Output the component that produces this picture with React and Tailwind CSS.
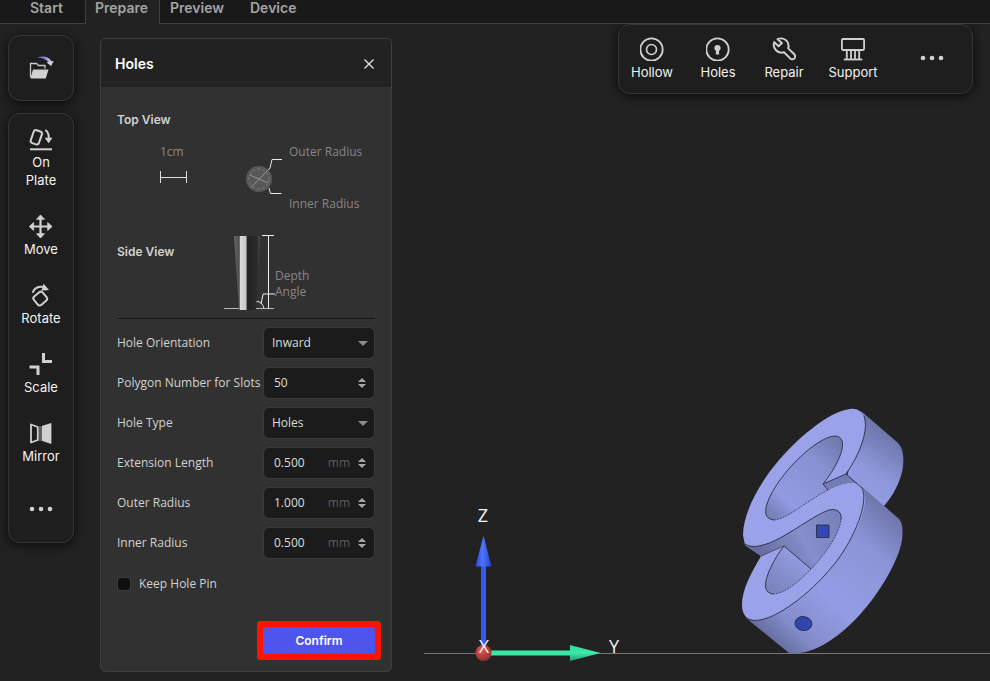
import React, { useState } from "react";

const stroke = {
  fill: "none",
  stroke: "currentColor",
  strokeWidth: 2,
  strokeLinecap: "round",
  strokeLinejoin: "round",
};

function Icon({ children }) {
  return (
    <svg viewBox="0 0 24 24" className="size-6 shrink-0 text-[#d0d0d0]" aria-hidden="true">
      {children}
    </svg>
  );
}

const OnPlateIcon = () => (
  <Icon>
    <g {...stroke}>
      <rect x="3" y="3.6" width="8.600" height="13.6" rx="2.4" transform="rotate(19 7.500 10.4)" />
      <path d="M17 3.500c2.200 2 3 4.500 2.700 7.500" />
      <path d="M1 22.300h22" strokeLinecap="butt" />
    </g>
    <path d="M15.700 10.700h7.800l-3.900 5.500z" fill="currentColor" />
  </Icon>
);

const MoveIcon = () => (
  <Icon>
    <path d="M11.500 2.500v20M2 12.500h19.500" {...stroke} strokeWidth="2.200" />
    <path
      d="M11.500 1l4 4.300h-8zM11.500 24l4-4.300h-8zM.3 12.500l4.300-4v8zM23 12.500l-4.300-4v8z"
      fill="currentColor"
      stroke="currentColor"
      strokeWidth=".8"
      strokeLinejoin="round"
    />
  </Icon>
);

const RotateIcon = () => (
  <Icon>
    <rect x="5.500" y="10" width="11.500" height="11" rx="2.800" transform="rotate(-40 11.300 15.500)" {...stroke} />
    <path d="M4 9c1.500-4 6-5.800 11.500-5" {...stroke} />
    <path d="M14.500.8l5.500 6.200-7.500.8z" fill="currentColor" />
  </Icon>
);

const ScaleIcon = () => (
  <Icon>
    <g fill="none" stroke="currentColor" strokeWidth="3">
      <path d="M14.500 1v8.500H23" />
      <path d="M.5 15H9v8" />
    </g>
  </Icon>
);

const MirrorIcon = () => (
  <Icon>
    <path d="M2 3.500l6.800 2.500v13L2 21.500z" {...stroke} strokeWidth="1.800" />
    <path d="M13 5.300L22 2.500v20l-9-3z" fill="currentColor" stroke="currentColor" strokeWidth=".8" strokeLinejoin="round" />
    <path d="M11 5v15" stroke="currentColor" strokeWidth=".7" />
  </Icon>
);

const HollowIcon = () => (
  <Icon>
    <circle cx="11.500" cy="12.500" r="11.200" {...stroke} strokeWidth="1.800" />
    <circle cx="11.500" cy="12.500" r="5" {...stroke} strokeWidth="1.600" />
  </Icon>
);

const HolesIcon = () => (
  <Icon>
    <circle cx="11.500" cy="12.500" r="11.200" {...stroke} strokeWidth="1.800" />
    <circle cx="11.500" cy="11" r="3.100" fill="currentColor" />
    <path d="M10.200 12h2.600l.4 5.500h-3.400z" fill="currentColor" />
  </Icon>
);

const RepairIcon = () => (
  <Icon>
    <path
      d="M5.500 2.200c3.500-1.500 7.500-.7 9.700 2.300 1.400 2.100 1.700 4.500 1 6.900l6.100 5.900c1.200 1.200 1.200 2.900.1 4.100-1.100 1.200-2.900 1.200-4.200 0L12 15.300c-3 .9-5.900.2-8-2-2.200-2.300-2.800-5.200-1.700-8.200l4.300 4.100 3.300-3.100z"
      {...stroke}
    />
  </Icon>
);

const SupportIcon = () => (
  <Icon>
    <g fill="none" stroke="currentColor" strokeWidth="1.800">
      <rect x=".9" y="2" width="22.200" height="11" rx="1.200" />
      <path d="M5.800 13v9M10 13v9M14 13v9M18.200 13v9" />
      <path d="M2.800 22.500h18.500" />
    </g>
  </Icon>
);

const DotsIcon = () => (
  <Icon>
    <circle cx="3" cy="12" r="2.300" fill="currentColor" />
    <circle cx="12" cy="12" r="2.300" fill="currentColor" />
    <circle cx="21" cy="12" r="2.300" fill="currentColor" />
  </Icon>
);

function Tool({ icon, label, className = "" }) {
  return (
    <button className={"flex flex-col items-center gap-0.5 text-[13px] leading-[18px] text-[#f2f2f2] " + className}>
      {icon}
      <span>{label}</span>
    </button>
  );
}

const box = "rounded-xl border border-[#363636] bg-[#1e1e1e] shadow-[0_2px_12px_rgba(0,0,0,0.7)]";

function Header() {
  return (
    <header className="flex h-6 text-[14px] leading-4 font-semibold text-[#a3a3a3]">
      <nav className="flex w-full">
        <button className="flex w-[85px] border-b border-[#414141] bg-[#191919] pl-[30px]">Start</button>
        <button className="flex w-[75px] border-x border-[#414141] bg-[#222222] pl-[9px]">Prepare</button>
        <div className="flex flex-1 items-start gap-[26px] border-b border-[#414141] bg-[#191919] pl-[10px]">
          <button>Preview</button>
          <button>Device</button>
        </div>
      </nav>
    </header>
  );
}

function Rail() {
  return (
    <aside className="flex w-[66px] shrink-0 flex-col gap-3 pt-[11px]">
      <button aria-label="Open file" className={"flex h-[66px] items-center justify-center " + box}>
        <svg viewBox="0 0 26 26" className="size-[26px]" aria-hidden="true">
          <defs>
            <linearGradient id="swoosh" x1="0" x2="1">
              <stop offset="0" stopColor="#4648a8" />
              <stop offset="1" stopColor="#c8c8e8" />
            </linearGradient>
          </defs>
          <path d="M2.500 22V8.500h6l2 2h6.500v3" fill="none" stroke="#c9c9c9" strokeWidth="1.300" />
          <path d="M5 14.500h15.500l-2.800 9H2.400z" fill="#d2d2d2" />
          <path d="M9 3c5-2.800 13.500-1.500 15 5l-3 .5C19.500 4.300 14 2.600 9 3z" fill="url(#swoosh)" />
          <path d="M18.500 7.500l7.200-1.700-2.500 5.200z" fill="#d2d2d2" />
        </svg>
      </button>
      <div className={"flex flex-col items-center gap-[25px] pt-[13px] pb-[14px] " + box}>
        <Tool icon={<OnPlateIcon />} label="On Plate" className="w-10" />
        <Tool icon={<MoveIcon />} label="Move" />
        <Tool icon={<RotateIcon />} label="Rotate" />
        <Tool icon={<ScaleIcon />} label="Scale" />
        <Tool icon={<MirrorIcon />} label="Mirror" />
        <button aria-label="More tools" className="flex h-[38px] items-center">
          <DotsIcon />
        </button>
      </div>
    </aside>
  );
}

function Toolbar() {
  return (
    <div className={"ml-auto flex h-[70px] shrink-0 pt-3 " + box}>
      <Tool icon={<HollowIcon />} label="Hollow" className="w-[66px]" />
      <Tool icon={<HolesIcon />} label="Holes" className="w-[66px]" />
      <Tool icon={<RepairIcon />} label="Repair" className="w-[66px]" />
      <Tool icon={<SupportIcon />} label="Support" className="w-[72px]" />
      <button aria-label="More actions" className="flex h-[42px] w-[83px] items-center justify-center pl-0.5">
        <DotsIcon />
      </button>
    </div>
  );
}

const field =
  "flex h-[30px] w-[110px] items-center rounded-[5px] bg-[#1b1b1b] text-[#dcdcdc] shadow-[0_0_0_1px_#3a3a3a]";

function Row({ id, label, children }) {
  return (
    <div className="flex items-center justify-between">
      <label htmlFor={id} className="whitespace-nowrap">
        {label}
      </label>
      {children}
    </div>
  );
}

function SelectRow({ id, label, options }) {
  return (
    <Row id={id} label={label}>
      <div className={"relative " + field}>
        <select id={id} className="h-full w-full appearance-none bg-transparent pl-2 outline-none">
          {options.map((o) => (
            <option key={o}>{o}</option>
          ))}
        </select>
        <svg viewBox="0 0 10 5" className="pointer-events-none absolute right-1.5 h-[5px] w-[10px]" aria-hidden="true">
          <path d="M0 0h10L5 5z" fill="#8c8c8c" />
        </svg>
      </div>
    </Row>
  );
}

function NumberRow({ id, label, initial, unit }) {
  const [value, setValue] = useState(initial);
  return (
    <Row id={id} label={label}>
      <div className={"gap-2 pr-2 pl-[10px] " + field}>
        <input
          id={id}
          inputMode="decimal"
          value={value}
          onChange={(e) => setValue(e.target.value)}
          className="w-0 flex-1 bg-transparent outline-none"
        />
        {unit && <span className="text-[#5c5c5c]">{unit}</span>}
        <svg viewBox="0 0 8 10" className="h-[10px] w-2 shrink-0" aria-hidden="true">
          <path d="M4 0l4 4H0zM4 10l4-4H0z" fill="#a8a8a8" />
        </svg>
      </div>
    </Row>
  );
}

function TopViewFigure() {
  return (
    <svg viewBox="0 0 258 104" className="block h-[104px] w-full font-['Open_Sans',sans-serif] text-[12px]" fill="#868686">
      <text x="43" y="28">1cm</text>
      <path d="M43.500 43v12M69.500 43v12M43.500 49.500h26" stroke="#dedede" fill="none" />
      <circle cx="142" cy="51" r="13" fill="#585858" />
      <circle cx="142" cy="51" r="10" fill="none" stroke="#808080" strokeDasharray="3 2" strokeWidth=".8" />
      <path d="M134 59.500l17.500-18M133 47l18 8" stroke="#a5a5a5" strokeWidth=".8" fill="none" />
      <path d="M151.500 42l1.500-2 2-8.500h10M152 60l1.500 5.500h11" stroke="#e8e8e8" fill="none" />
      <text x="172" y="28">Outer Radius</text>
      <text x="172" y="80">Inner Radius</text>
    </svg>
  );
}

function SideViewFigure() {
  return (
    <svg viewBox="0 0 100 86" className="block h-[86px] w-[100px] font-['Open_Sans',sans-serif] text-[12px]" fill="#868686">
      <defs>
        <linearGradient id="cone" x1="0" x2="1">
          <stop offset="0" stopColor="#6a6a6a" />
          <stop offset=".2" stopColor="#4c4c4c" />
          <stop offset=".25" stopColor="#d8d8d8" />
          <stop offset=".45" stopColor="#c8c8c8" />
          <stop offset=".52" stopColor="#222222" />
          <stop offset=".9" stopColor="#2c2c2c" />
          <stop offset="1" stopColor="#555555" />
        </linearGradient>
      </defs>
      <path d="M0 76.500h15M31 76.500h19" stroke="#b8b8b8" />
      <path d="M10 4h26l-4 74H15z" fill="url(#cone)" />
      <path d="M38 3.500h12M44.500 4v73M32.500 69.500c4 0 6 2 7.500 7M37 72l2-9.500v-.5h12" stroke="#f0f0f0" fill="none" />
      <text x="51" y="48">Depth</text>
      <text x="51" y="64">Angle</text>
    </svg>
  );
}

function HolesPanel() {
  return (
    <section className="mt-[14px] ml-[26px] flex w-[292px] shrink-0 flex-col self-start rounded-[5px] border border-[#3e3e3e] bg-[#313131] text-[12px] leading-4 text-[#d2d2d2]">
      <div className="flex h-12 items-center justify-between rounded-t bg-[#222222] pt-0.5 pr-[17px] pl-[14px]">
        <h2 className="text-[14px] font-semibold text-white">Holes</h2>
        <button aria-label="Close">
          <svg viewBox="0 0 10 10" className="size-[10px]">
            <path d="M.5.5l9 9M9.500.5l-9 9" stroke="#e4e4e4" strokeWidth="1.300" />
          </svg>
        </button>
      </div>
      <div className="px-4 pt-[25px]">
        <h3 className="font-semibold">Top View</h3>
        <TopViewFigure />
        <div className="flex">
          <h3 className="w-[107px] pt-3 font-semibold">Side View</h3>
          <SideViewFigure />
        </div>
        <hr className="border-[#191919]" />
        <form
          className="mt-[9px] flex flex-col gap-[10px] pr-px font-['Open_Sans',sans-serif]"
          onSubmit={(e) => e.preventDefault()}
        >
          <SelectRow id="orientation" label="Hole Orientation" options={["Inward", "Outward"]} />
          <NumberRow id="slots" label="Polygon Number for Slots" initial="50" />
          <SelectRow id="type" label="Hole Type" options={["Holes", "Slots"]} />
          <NumberRow id="extension" label="Extension Length" initial="0.500" unit="mm" />
          <NumberRow id="outer" label="Outer Radius" initial="1.000" unit="mm" />
          <NumberRow id="inner" label="Inner Radius" initial="0.500" unit="mm" />
          <label className="mt-2 flex items-center gap-[9px] pl-px">
            <input
              type="checkbox"
              className="size-3 appearance-none rounded-[3px] bg-[#111111] shadow-[0_0_0_1px_#3c3c3c] checked:bg-[#4f55ec]"
            />
            Keep Hole Pin
          </label>
          <div className="mt-[19px] -mr-[7px] mb-[11px] self-end rounded-[3px] bg-[#ff1200] p-1.5 font-[Inter,sans-serif]">
            <button className="block h-[27px] w-28 rounded-[2px] bg-[#4f55ec] font-semibold text-white">Confirm</button>
          </div>
        </form>
      </div>
    </section>
  );
}

function Scene() {
  return (
    <svg
      viewBox="0 24 990 657"
      preserveAspectRatio="xMidYMax slice"
      className="absolute inset-0 -z-10 h-full w-full"
      role="img"
      aria-label="Model on the build plate"
    >
      <defs>
        <linearGradient id="upperSide" gradientUnits="userSpaceOnUse" x1="895" y1="440" x2="855" y2="500">
          <stop offset="0" stopColor="#6f77ac" />
          <stop offset=".55" stopColor="#8f98dc" />
          <stop offset="1" stopColor="#949de4" />
        </linearGradient>
        <linearGradient id="lowerSide" gradientUnits="userSpaceOnUse" x1="895" y1="510" x2="775" y2="645">
          <stop offset="0" stopColor="#6b73a6" />
          <stop offset=".25" stopColor="#8b94d6" />
          <stop offset=".6" stopColor="#949de4" />
          <stop offset=".85" stopColor="#848ccc" />
          <stop offset="1" stopColor="#666d9e" />
        </linearGradient>
        <linearGradient id="upperHole" gradientUnits="userSpaceOnUse" x1="843" y1="438" x2="768" y2="520">
          <stop offset="0" stopColor="#6d75aa" />
          <stop offset=".3" stopColor="#8790d0" />
          <stop offset=".75" stopColor="#929be2" />
          <stop offset="1" stopColor="#7078ae" />
        </linearGradient>
        <linearGradient id="lowerHole" gradientUnits="userSpaceOnUse" x1="842" y1="512" x2="760" y2="560">
          <stop offset="0" stopColor="#7780ba" />
          <stop offset=".5" stopColor="#868ecb" />
          <stop offset="1" stopColor="#626a9a" />
        </linearGradient>
        <linearGradient id="pocket" gradientUnits="userSpaceOnUse" x1="795" y1="555" x2="768" y2="595">
          <stop offset="0" stopColor="#929bdf" />
          <stop offset="1" stopColor="#7780b8" />
        </linearGradient>
        <linearGradient id="zCone" x1="0" x2="1">
          <stop offset="0" stopColor="#2b48e0" />
          <stop offset=".45" stopColor="#4d74ff" />
          <stop offset="1" stopColor="#2440c8" />
        </linearGradient>
        <linearGradient id="yCone" x1="0" x2="0" y1="0" y2="1">
          <stop offset="0" stopColor="#30d89a" />
          <stop offset=".5" stopColor="#40e8aa" />
          <stop offset="1" stopColor="#259a70" />
        </linearGradient>
        <radialGradient id="xBall" cx=".4" cy=".3" r=".8">
          <stop offset="0" stopColor="#e85555" />
          <stop offset="1" stopColor="#802c2c" />
        </radialGradient>
      </defs>

      <path d="M424 653.500h566" stroke="#767676" />

      <rect x="481" y="566" width="5" height="84" fill="#3657fa" />
      <path d="M483.500 535.500l8 31h-16z" fill="url(#zCone)" />
      <rect x="490" y="650.500" width="81" height="5" fill="#3ae8a6" />
      <path d="M570 645l30.500 8-30.500 8z" fill="url(#yCone)" />
      <circle cx="483.500" cy="653" r="8" fill="url(#xBall)" />
      <g fill="#f2f2f2" textAnchor="middle" className="font-['Open_Sans',sans-serif] text-[18px]">
        <text x="483" y="522">Z</text>
        <text x="484" y="653">X</text>
        <text x="614" y="653">Y</text>
      </g>

      <path d="M861 411L898 443C904 449 904 460 902.500 470C900 482 893 496 884 506L846 482Z" fill="url(#upperSide)" />
      <path
        d="M860 485L898 518C903 522 903 530 902 540C898 565 871 608 843 631C823 648 805 655 789 653L746 618Z"
        fill="url(#lowerSide)"
      />
      <path
        d="M846 474C858 456 866 434 865.500 425C865 412 858 408 850 409C829 411 795 440 775 465C757 487 743 515 743 535L745 545L761 556C750 575 742 590 742 605C742 617 749 621 760 620C782 616 815 589 836 562C855 537 866 513 865 497C864 488 861 485 857 483Z"
        fill="#9aa3e9"
      />
      <g stroke="#2b2e40" strokeWidth=".9" strokeLinejoin="round">
        <path
          d="M823 484C835 469 843 453 842.500 444C842 434 833 434 821 441C800 453 773 484 767 504C764 514 766 519 774 520C788 519 806 501 828 490Z"
          fill="url(#upperHole)"
          stroke="none"
        />
        <path
          d="M823 484C835 469 843 453 842.500 444C842 434 833 434 821 441C800 453 773 484 767 504C764 514 766 519 774 520"
          fill="none"
        />
        <path
          d="M774 520C788 519 806 501 828 490C840 483 851 481 857 483"
          fill="none"
          strokeDasharray="2 1"
          strokeWidth=".7"
        />
        <path d="M823 484L846 474L857 483C847 482 839 484 828 490Z" fill="#737cb4" stroke="none" />
        <path d="M828 490L823 484L846 474L862 488" fill="none" />
        <path
          d="M745 544C752 549 765 546 780 538C800 527 815 515 829 510C838 508 842 513 841 520C839 534 827 552 811 569L784 546L761 556Z"
          fill="url(#lowerHole)"
          stroke="none"
        />
        <path d="M784 546L811 569C797 584 783 594 773 594C765 593 764 586 767 577C770 567 777 555 784 546Z" fill="url(#pocket)" stroke="none" />
        <path d="M811 569L784 546C777 555 770 567 767 577C764 586 765 593 773 594" fill="none" />
        <path d="M773 594C783 594 797 584 811 569C827 552 839 534 841 520" fill="none" strokeDasharray="2 1" strokeWidth=".7" />
        <path d="M745 544C752 549 765 546 780 538C800 527 815 515 829 510C838 508 842 513 841 520" fill="none" />
        <path d="M761 556L784 546" fill="none" strokeWidth=".6" />
        <path d="M864 416C869 430 860 454 846 474" fill="none" />
        <path d="M862 488C869 502 855 537 836 562C815 589 782 616 760 620C753 621 748 620 745 617" fill="none" />
        <rect x="816.500" y="525" width="12.500" height="12.500" fill="#3547b8" />
        <ellipse cx="803.500" cy="623.500" rx="8.500" ry="7" fill="#3145ae" transform="rotate(8 803 623)" />
      </g>
    </svg>
  );
}

export default function App() {
  return (
    <div className="flex min-h-screen flex-col bg-[#222222] font-[Inter,sans-serif]">
      <Header />
      <main className="relative isolate flex flex-1 items-start overflow-hidden pr-[17px] pl-2">
        <Scene />
        <Rail />
        <HolesPanel />
        <Toolbar />
      </main>
    </div>
  );
}
